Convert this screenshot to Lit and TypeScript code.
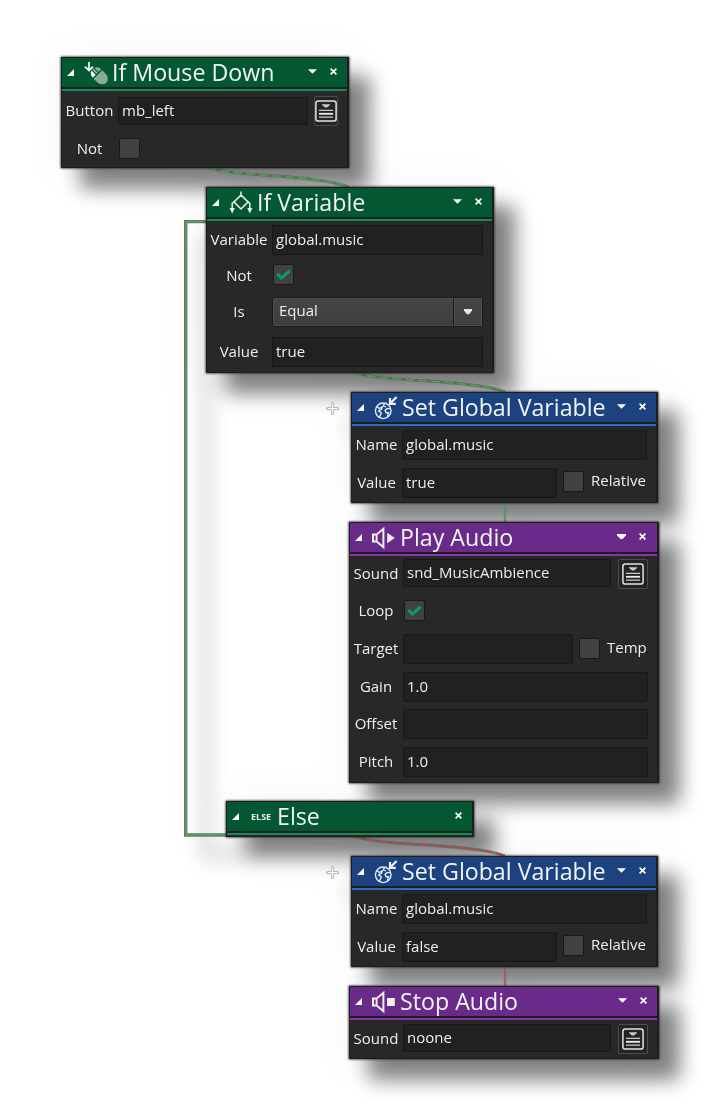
import { LitElement, html, css, svg, nothing } from "lit";
import { customElement, property } from "lit/decorators.js";
import { styleMap } from "lit/directives/style-map.js";

type Control =
  | { kind: "input"; text?: string; width: number; height?: number; dy?: number }
  | { kind: "select"; text: string; width: number }
  | { kind: "check"; on?: boolean; dy?: number; text?: string; dx?: number }
  | { kind: "picker"; width: number };

interface Row {
  label: string;
  gap: number;
  height: number;
  drop?: number;
  controls: Control[];
}

interface ActionNode {
  x: number;
  y: number;
  w: number;
  h: number;
  theme: "flow" | "data" | "audio";
  icon: string;
  title: string;
  labelW: number;
  menu: boolean;
  end?: number;
  bold?: boolean;
  rows: Row[];
}

const setGlobal = (y: number, value: string): ActionNode => ({
  x: 351, y, w: 307, h: 111, theme: "data", icon: "globe", title: "Set Global Variable",
  labelW: 50, menu: true,
  rows: [
    { label: "Name", gap: 4, height: 30, controls: [{ kind: "input", text: "global.music", width: 245 }] },
    {
      label: "Value", gap: 8, height: 30,
      controls: [
        { kind: "input", text: value, width: 155 },
        { kind: "check", text: "Relative", dy: 3, dx: 6 },
      ],
    },
  ],
});

const NODES: ActionNode[] = [
  {
    x: 61, y: 57, w: 288, h: 111, theme: "flow", icon: "mouse", title: "If Mouse Down",
    labelW: 56, menu: true,
    rows: [
      {
        label: "Button", gap: 5, height: 30,
        controls: [
          { kind: "input", text: "mb_left", width: 190, height: 28, dy: 1 },
          { kind: "picker", width: 24 },
        ],
      },
      { label: "Not", gap: 12, height: 21, controls: [{ kind: "check", dx: 1 }] },
    ],
  },
  {
    x: 206, y: 187, w: 288, h: 186, theme: "flow", icon: "branch", title: "If Variable",
    labelW: 65, menu: true,
    rows: [
      { label: "Variable", gap: 4, height: 30, controls: [{ kind: "input", text: "global.music", width: 211 }] },
      { label: "Not", gap: 9, height: 21, drop: 1, controls: [{ kind: "check", on: true, dx: 1 }] },
      { label: "Is", gap: 12, height: 30, controls: [{ kind: "select", text: "Equal", width: 211 }] },
      { label: "Value", gap: 10, height: 30, controls: [{ kind: "input", text: "true", width: 211 }] },
    ],
  },
  setGlobal(392, "true"),
  {
    x: 349, y: 522, w: 310, h: 261, theme: "audio", icon: "play", title: "Play Audio",
    labelW: 53, menu: true, end: 1.5, bold: true,
    rows: [
      {
        label: "Sound", gap: 3, height: 30,
        controls: [
          { kind: "input", text: "snd_MusicAmbience", width: 208, height: 28 },
          { kind: "picker", width: 30 },
        ],
      },
      { label: "Loop", gap: 11, height: 21, controls: [{ kind: "check", on: true, dx: 1 }] },
      {
        label: "Target", gap: 13, height: 30,
        controls: [
          { kind: "input", width: 170 },
          { kind: "check", text: "Temp", dy: 4, dx: 6 },
        ],
      },
      { label: "Gain", gap: 8, height: 30, controls: [{ kind: "input", text: "1.0", width: 245 }] },
      { label: "Offset", gap: 7, height: 30, controls: [{ kind: "input", width: 245 }] },
      { label: "Pitch", gap: 8, height: 30, controls: [{ kind: "input", text: "1.0", width: 245 }] },
    ],
  },
  {
    x: 226, y: 801, w: 248, h: 36, theme: "flow", icon: "else", title: "Else",
    labelW: 50, menu: false, rows: [],
  },
  setGlobal(856, "false"),
  {
    x: 349, y: 986, w: 310, h: 73, theme: "audio", icon: "stop", title: "Stop Audio",
    labelW: 53, menu: true,
    rows: [
      {
        label: "Sound", gap: 4, height: 30,
        controls: [
          { kind: "input", text: "noone", width: 208, height: 28 },
          { kind: "picker", width: 30 },
        ],
      },
    ],
  },
];

const speaker = svg`<path d="M2 8.4H5.6V15.6H2Z M5.6 8.4L12.4 2.8V21.2L5.6 15.6" fill="none" stroke="#eee" stroke-width="2"/>`;

const ICONS: Record<string, unknown> = {
  mouse: svg`
    <path d="M6 1V9M2 5.6L6 9.4L10 5.6" fill="none" stroke="#eef4f0" stroke-width="1.8"/>
    <g transform="translate(16.4 14.8) rotate(-45)">
      <path d="M-6 -2V2.6A6 7.2 0 0 0 6 2.6V-2Z" fill="#86ad98"/>
      <path d="M-6 -3.4A6 6 0 0 1 -1.8 -9.2V-3.4Z" fill="#f2f6f3"/>
      <path d="M-.6 -9.4H.9V-3.4H-.6Z" fill="#a9c6b5"/>
      <path d="M2.1 -9.1A6 6 0 0 1 6 -3.4H2.1Z" fill="#86ad98"/>
    </g>`,
  branch: svg`
    <path d="M13 .6V4.4M13 4L20 11L13 18L6 11Z M7.6 9.4L4.2 12.4V18 M18.4 9.4L21.8 12.4V18" fill="none" stroke="#eef4f0" stroke-width="1.5"/>
    <path d="M1.6 17H6.8L4.2 22.4Z M19.2 17H24.4L21.8 22.4Z" fill="#eef4f0"/>`,
  globe: svg`
    <g transform="translate(.8 .2)">
      <circle cx="9.4" cy="14.6" r="7.8" fill="none" stroke="#e8edf5" stroke-width="1.4"/>
      <path d="M3 10.4L5.6 12.4L8.6 10.6L7.6 13.4L4.8 14.6L7.6 16.8L6.6 19L5.4 21M10.6 7.4L9.6 9.6L12 10.8M16.8 12.6L13.4 12.2L11.2 14.2L12.4 16.6L14.6 16.4L13.6 20.4" fill="none" stroke="#e8edf5" stroke-width="1.3"/>
    </g>
    <path d="M23.6 1L18 6.6M17 2V7.8H22.8" fill="none" stroke="#eef1f6" stroke-width="2.2"/>`,
  play: svg`${speaker}<path d="M16.2 6.8L23.8 12L16.2 17.2Z" fill="#eee"/>`,
  stop: svg`${speaker}<path d="M16 8H23.8V16H16Z" fill="#eee"/>`,
};

@customElement("action-card")
class ActionCard extends LitElement {
  @property({ attribute: false }) node!: ActionNode;

  static styles = css`
    :host { display: block; height: 100%; }
    .card {
      box-sizing: border-box; height: 100%; background: #282828; border: 1px solid #1c1d1c;
      border-right-width: 2px; display: flex; flex-direction: column;
      box-shadow: 0 0 2px 1px rgba(40, 40, 40, 0.65); border-radius: 1px;
      color: #eee; font: 15px/20px "Open Sans", sans-serif;
    }
    .head { height: 29px; flex: none; display: flex; align-items: flex-start; }
    .flow .head { background: #035732; }
    .data .head { background: #1c437f; }
    .audio .head { background: #6a2a8a; }
    .rule { height: 2px; flex: none; border-top: 2px solid #1c1d1c; }
    .flow .rule { background: #079155; }
    .data .rule { background: #2e6bcb; }
    .audio .rule { background: #8a34b4; }
    .fold { width: 7px; height: 7px; margin: 11px 9px 0 5px; flex: none; }
    .icon { width: 24px; height: 24px; margin-top: 3px; flex: none; overflow: visible; }
    .word { width: 24px; flex: none; margin: 9px -3px 0 3px; font: 700 9px/12px "Open Sans", sans-serif; }
    .title { flex: 1; margin-left: 5px; font-size: 23.2px; line-height: 28px; white-space: nowrap; color: #f2f5f3; }
    .caret { width: 9px; height: 5px; margin: 11px 13px 0 0; flex: none; }
    .close { width: 7px; height: 7px; margin: 10px 10px 0 0; flex: none; }
    .ends { display: flex; }
    .row { display: flex; align-items: flex-start; flex: none; }
    .label { flex: none; text-align: center; align-self: center; white-space: nowrap; box-sizing: border-box; padding-right: 1px; }
    .input {
      box-sizing: border-box; border: 1px solid #181818; border-radius: 2px; background: #212121;
      padding: 0 0 2px 3px; display: flex; align-items: center; white-space: nowrap;
    }
    .select {
      box-sizing: border-box; height: 30px; display: flex; border: 1px solid #1a1a1a; border-radius: 2px;
      background: linear-gradient(#464646, #3e3e3e); box-shadow: inset 0 0 0 1px #4c4c4c;
    }
    .choice { flex: 1; padding: 2px 0 0 6px; }
    .drop {
      box-sizing: border-box; width: 29px; border-left: 1px solid #1c1c1c; padding-right: 1px;
      display: flex; align-items: center; justify-content: center; box-shadow: inset 0 0 0 1px #4e4e4e;
    }
    .check {
      box-sizing: border-box; width: 21px; height: 21px; border: 1px solid #191919; border-radius: 2px;
      background: #404241; display: flex; align-items: center; justify-content: center; flex: none;
    }
    .side { margin-left: 7px; white-space: nowrap; }
    .picker {
      box-sizing: border-box; height: 30px; margin-left: 6px; border: 1px solid #4d4d4d; border-radius: 2px;
      display: flex; align-items: center; justify-content: center; flex: none; background: #242424;
    }
    .wide { margin-left: 7px; }
    .picker svg { flex: none; }
  `;

  private control(c: Control) {
    switch (c.kind) {
      case "input":
        return html`<div class="input" style=${styleMap({ width: `${c.width}px`, height: `${c.height ?? 30}px`, marginTop: `${c.dy ?? 0}px` })}>${c.text ?? nothing}</div>`;
      case "select":
        return html`<div class="select" style=${styleMap({ width: `${c.width}px` })}>
          <span class="choice">${c.text}</span>
          <span class="drop"><svg width="8" height="6" viewBox="0 0 8 6"><path d="M0 0H8V1.4L5.2 5.2H2.8L0 1.4Z" fill="#dfe8e3" /></svg></span>
        </div>`;
      case "check":
        return html`<div class="check" style=${styleMap({ marginTop: `${c.dy ?? 0}px`, marginLeft: `${c.dx ?? 0}px` })}>
            ${c.on ? html`<svg width="15" height="11" viewBox="0 0 15 11"><path d="M1.2 5L5.4 9L13.8 1.6" fill="none" stroke="#0d9a5e" stroke-width="3.2" /></svg>` : nothing}
          </div>
          ${c.text ? html`<span class="side" style=${styleMap({ marginTop: `${(c.dy ?? 0) - 1}px` })}>${c.text}</span>` : nothing}`;
      case "picker":
        return html`<div class="picker ${c.width > 24 ? "wide" : ""}" style=${styleMap({ width: `${c.width}px` })}>
          <svg width="22" height="22" viewBox="0 0 22 22">
            <rect x=".9" y=".9" width="20.2" height="20.2" rx="2.4" fill="none" stroke="#e2e2e2" stroke-width="1.5" />
            <path d="M7 4.2H15V5L12 7.4H10L7 5Z" fill="#c8c8c8" />
            <path d="M4 10.4H18M4 17.2H18" stroke="#c8c8c8" stroke-width="1.2" />
            <path d="M4 13.8H18" stroke="#eee" stroke-width="1.8" />
          </svg>
        </div>`;
    }
  }

  render() {
    const n = this.node;
    return html`<div class="card ${n.theme}">
      <div class="head">
        <svg class="fold" viewBox="0 0 7 7"><path d="M7 0V7H0Z" fill="#fff" /></svg>
        ${n.icon === "else"
          ? html`<span class="word">ELSE</span>`
          : html`<svg class="icon" viewBox="0 0 24 24">${ICONS[n.icon]}</svg>`}
        <span class="title">${n.title}</span>
        <span class="ends" style=${styleMap({ marginRight: `${n.end ?? 0}px` })}>
          ${n.menu ? html`<svg class="caret" viewBox="0 0 9 5"><path d=${n.bold ? "M0 0H9V1.2L5.6 5H3.4L0 1.2Z" : "M0 .2H9L4.5 4.8Z"} fill="#fff" /></svg>` : nothing}
          <svg class="close" viewBox="0 0 7 7"><path d="M.6 .6L6.4 6.4M6.4 .6L.6 6.4" stroke="#fff" stroke-width="1.7" /></svg>
        </span>
      </div>
      <div class="rule"></div>
      ${n.rows.map(
        (r) => html`<div class="row" style=${styleMap({ marginTop: `${r.gap}px`, height: `${r.height}px` })}>
          <span class="label" style=${styleMap({ width: `${n.labelW}px`, paddingBottom: `${r.drop ? 0 : 2}px` })}>${r.label}</span>
          ${r.controls.map((c) => this.control(c))}
        </div>`
      )}
    </div>`;
  }
}

@customElement("app-root")
class AppRoot extends LitElement {
  static styles = css`
    :host { display: block; }
    .canvas { position: relative; width: 720px; height: 1120px; overflow: hidden; background: #fff; }
    .graph {
      position: absolute; inset: 0;
      filter: drop-shadow(20px 20px 10px rgba(0, 0, 0, 0.49)) drop-shadow(0 0 18px rgba(0, 0, 0, 0.04));
    }
    .wires { position: absolute; inset: 0; }
    .node { position: absolute; }
  `;

  private curve(x: number, y: number, endX: number, color: string) {
    const d = `M${x} ${y} C${x + 22} ${y + 10} ${endX - 34} ${y + 7} ${endX} ${y + 20}`;
    return svg`<path d=${d} fill="none" stroke="#4f5a4f" stroke-opacity=".7" stroke-width="2.8"/>
      <path d=${d} fill="none" stroke=${color} stroke-width="1.6" stroke-dasharray="9 4"/>`;
  }

  private plus(x: number, y: number) {
    const d = `M${x - 5} ${y}H${x + 5}M${x} ${y - 5}V${y + 5}`;
    return svg`<path d=${d} stroke="#a8a8a8" stroke-opacity=".8" stroke-width="3" stroke-linecap="round"/>
      <path d=${d} stroke="#fff" stroke-width="1.2"/>`;
  }

  render() {
    return html`<div class="canvas">
      <div class="graph">
        <svg class="wires" width="720" height="1120" viewBox="0 0 720 1120">
          <path d="M207 221.6H185.7V835H227" fill="none" stroke="#5f7562" stroke-width="3.4" />
          <path d="M207 221.6H185.7V835H227" fill="none" stroke="#62a064" stroke-width="1.5" />
          ${this.curve(208, 167, 349, "#45ab4a")} ${this.curve(354, 372, 505, "#45ab4a")} ${this.curve(354, 836, 505, "#c0494a")}
          <path d="M505 503V522" stroke="#588f5c" stroke-opacity=".8" stroke-width="2.4" />
          <path d="M505 967V986" stroke="#a85557" stroke-opacity=".8" stroke-width="2.4" />
          ${this.plus(332.5, 408.5)} ${this.plus(332.5, 872.5)}
        </svg>
        ${NODES.map(
          (n) => html`<div class="node" style=${styleMap({ left: `${n.x}px`, top: `${n.y}px`, width: `${n.w}px`, height: `${n.h}px` })}>
            <action-card .node=${n}></action-card>
          </div>`
        )}
      </div>
    </div>`;
  }
}
